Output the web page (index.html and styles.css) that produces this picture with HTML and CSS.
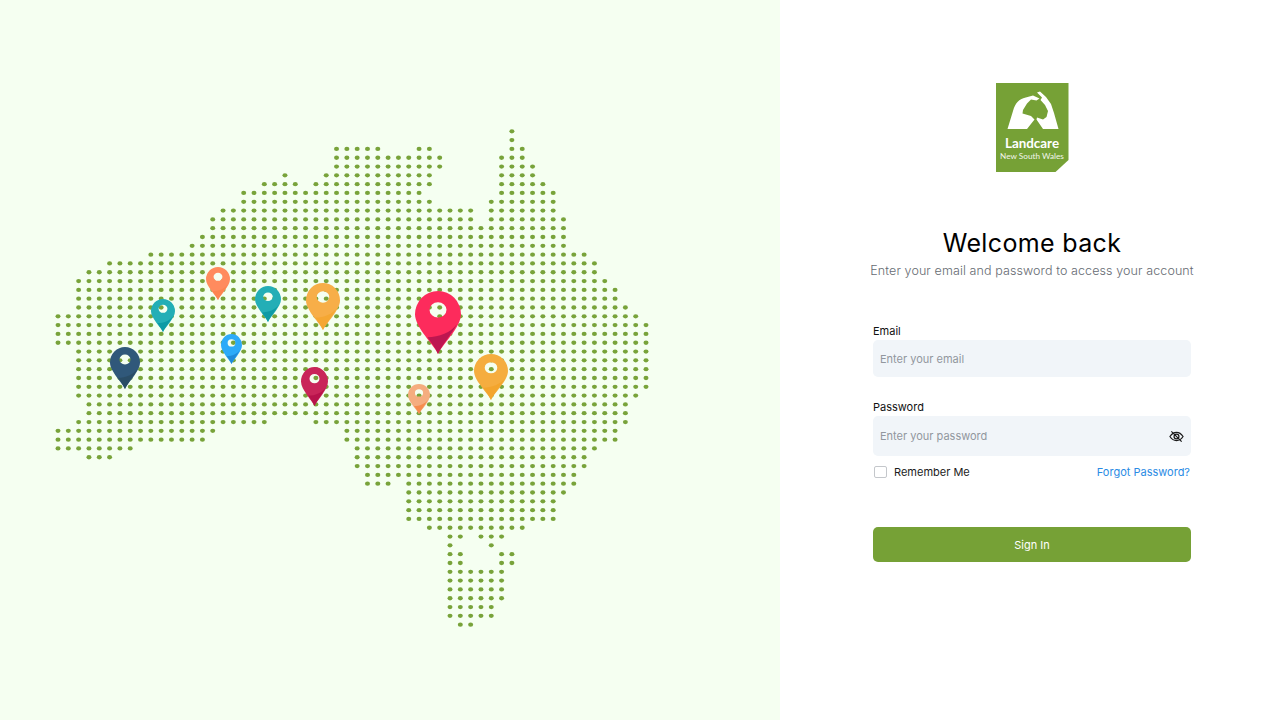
FILE: index.html
```html
<!DOCTYPE html>
<html lang="en">
<head>
<meta charset="utf-8">
<title>Landcare NSW - Sign in</title>
<link rel="stylesheet" href="styles.css">
</head>
<body>
<svg class="defs" width="0" height="0" aria-hidden="true">
  <symbol id="pin" viewBox="0 0 46 62" preserveAspectRatio="none">
    <path class="pin-body" fill-rule="evenodd" d="M23 62C19 53 0 36 0 23A23 23 0 1 1 46 23C46 36 27 53 23 62ZM14.5 18.5a8.5 7.5 0 1 0 17 0a8.5 7.5 0 1 0-17 0Z"/>
    <path class="pin-low" d="M12.5 45.5C24 45.5 36 41 42 32.5C37 42 27 53 23 62C20.5 56 16 50.5 12.5 45.5Z"/>
  </symbol>
</svg>
<main class="page">
  <section class="map">
    <svg id="dots" class="dots" viewBox="0 0 780 720" width="780" height="720" aria-hidden="true"></svg>
    <svg class="pin pin-coral"><use href="#pin"/></svg>
    <svg class="pin pin-teal-a"><use href="#pin"/></svg>
    <svg class="pin pin-teal-b"><use href="#pin"/></svg>
    <svg class="pin pin-amber"><use href="#pin"/></svg>
    <svg class="pin pin-red"><use href="#pin"/></svg>
    <svg class="pin pin-blue"><use href="#pin"/></svg>
    <svg class="pin pin-navy"><use href="#pin"/></svg>
    <svg class="pin pin-crimson"><use href="#pin"/></svg>
    <svg class="pin pin-peach"><use href="#pin"/></svg>
    <svg class="pin pin-gold"><use href="#pin"/></svg>
  </section>
  <section class="panel">
    <div class="logo">
      <svg class="logo-hands" viewBox="0 0 73 47" width="73" height="47" aria-hidden="true">
        <path fill="#fff" fill-rule="evenodd" d="M11.5 46L17 28C19 21 22 17 28 15L37 12.5L43.5 15.5L40.5 17.5L35 16.5L31 20.5L27 27L26.5 30.5L35 33L38.5 36.5L31 46ZM41 9.5L44 8.5L50 14L55 21L58 30L62.5 46H47L40.5 36.5L41 34.5L47 36.5L50.5 34L52 28L49 22L44.5 17L46 14.5Z"/>
      </svg>
      <span class="logo-name">Landcare</span>
      <span class="logo-sub">New South Wales</span>
    </div>
    <h1 class="title">Welcome back</h1>
    <p class="subtitle">Enter your email and password to access your account</p>
    <form class="form">
      <label class="label label-email">Email</label>
      <div class="input input-email"><span class="placeholder">Enter your email</span></div>
      <label class="label label-password">Password</label>
      <div class="input input-password">
        <span class="placeholder">Enter your password</span>
        <svg class="eye" viewBox="0 0 16 16" width="15" height="15" aria-hidden="true">
          <path d="M1 8C3 5 5.3 3.6 8 3.6S13 5 15 8C13 11 10.7 12.4 8 12.4S3 11 1 8Z"/>
          <circle cx="8" cy="8" r="2.6"/>
          <path d="M2.5 2.5L13.5 13.5"/>
        </svg>
      </div>
      <div class="options">
        <span class="remember"><span class="checkbox"></span>Remember Me</span>
        <a class="forgot">Forgot Password?</a>
      </div>
      <button class="submit" type="button">Sign In</button>
    </form>
  </section>
</main>
<script src="map.js"></script>
</body>
</html>
```
FILE: styles.css
```css
* { box-sizing: border-box; }
html, body { margin: 0; padding: 0; }
body {
  width: 1280px;
  height: 720px;
  overflow: hidden;
  background: #fff;
  font-family: Inter, "Noto Sans", "Liberation Sans", sans-serif;
  color: #000;
}
.defs { position: absolute; }
.page { display: flex; width: 1280px; height: 720px; }

/* map */
.map { position: relative; flex: 0 0 780px; height: 720px; background: #f5fff1; }
.dots { display: block; }
.dots ellipse { fill: #78a33a; }
.pin { position: absolute; display: block; }
.pin-body { fill: var(--top); }
.pin-low { fill: var(--low); }
.pin-red { left: 415px; top: 291px; width: 46px; height: 63px; --top: #fd2b5c; --low: #bd1650; }
.pin-gold { left: 474px; top: 354px; width: 34px; height: 46px; --top: #f5ad3f; --low: #f3a52d; }
.pin-peach { left: 408px; top: 384px; width: 22px; height: 30px; --top: #f5ad7f; --low: #f68c4e; }
.pin-crimson { left: 301px; top: 367px; width: 27px; height: 39px; --top: #c92559; --low: #b8124b; }
.pin-navy { left: 110px; top: 347px; width: 30px; height: 42px; --top: #30587a; --low: #2a4d66; }
.pin-teal-a { left: 151px; top: 299px; width: 24px; height: 33px; --top: #23aeb6; --low: #0c9aa5; }
.pin-teal-b { left: 255px; top: 286px; width: 26px; height: 36px; --top: #23aeb6; --low: #0c9aa5; }
.pin-blue { left: 221px; top: 334px; width: 21px; height: 30px; --top: #2cabf9; --low: #208bd9; }
.pin-amber { left: 306px; top: 283px; width: 34px; height: 47px; --top: #f7ae48; --low: #f5a733; }
.pin-coral { left: 206px; top: 267px; width: 24px; height: 33px; --top: #ff8b5e; --low: #fd8450; }

/* panel */
.panel {
  flex: 1;
  display: flex;
  flex-direction: column;
  align-items: center;
  padding: 83px 0 0 4px;
  background: #fff;
}
.logo {
  width: 73px;
  height: 89px;
  display: flex;
  flex-direction: column;
  align-items: center;
  background: #76a136;
  color: #fff;
  clip-path: polygon(0 0, 100% 0, 100% 77px, 60px 100%, 0 100%);
}
.logo-hands { display: block; flex: none; }
.logo-name { margin-top: 6px; font: 700 13.4px/14px Lato, sans-serif; }
.logo-sub { margin-top: 1px; font: 400 8.2px/10px Lato, sans-serif; white-space: nowrap; opacity: 0.9; }

.title {
  margin: 55px 0 0;
  font-size: 25px;
  line-height: 32px;
  font-weight: 400;
  letter-spacing: 0.35px;
  white-space: nowrap;
}
.subtitle {
  margin: 3px 0 0;
  font-size: 12.5px;
  line-height: 18px;
  font-weight: 300;
  letter-spacing: 0.1px;
  color: #666b72;
  white-space: nowrap;
}
.form { width: 318px; margin-top: 43px; display: flex; flex-direction: column; }
.label { display: block; font-size: 11px; line-height: 16px; color: #111; }
.label-password { margin-top: 22px; }
.input {
  display: flex;
  align-items: center;
  justify-content: space-between;
  margin-top: 1px;
  padding: 0 7px;
  background: #f1f5f9;
  border-radius: 5px;
}
.input-email { height: 37px; }
.input-password { height: 40px; }
.placeholder { font-size: 11px; color: #92979e; }
.eye { display: block; fill: none; stroke: #1a1a1a; stroke-width: 1.3; }
.options {
  display: flex;
  align-items: center;
  justify-content: space-between;
  margin-top: 10px;
  height: 12px;
  padding: 0 1px;
  font-size: 11px;
}
.remember { display: flex; align-items: center; color: #1c1c1c; }
.checkbox {
  width: 13px;
  height: 12px;
  margin-right: 7px;
  border: 1px solid #c4c7cb;
  border-radius: 2px;
  background: #fff;
}
.forgot { color: #2a8be4; font-weight: 400; }
.submit {
  margin-top: 49px;
  height: 35px;
  border: 0;
  border-radius: 5px;
  background: #76a136;
  color: #fff;
  font: 400 11px Inter, sans-serif;
}
```
FILE: map.js
```js
var rows = [
  [[44,44]],
  [[44,44]],
  [[27,31],[35,36],[44,45]],
  [[27,37],[43,45]],
  [[27,37],[43,46]],
  [[22,22],[26,36],[43,46]],
  [[20,23],[25,36],[43,47]],
  [[18,35],[43,48]],
  [[18,36],[42,48]],
  [[16,40],[42,48]],
  [[15,40],[42,49]],
  [[15,49]],
  [[14,49]],
  [[13,49]],
  [[9,51]],
  [[5,52]],
  [[3,52]],
  [[2,53]],
  [[2,54]],
  [[2,54]],
  [[2,55]],
  [[0,56]],
  [[0,57]],
  [[0,57]],
  [[0,57]],
  [[2,57]],
  [[2,57]],
  [[2,57]],
  [[2,57]],
  [[2,57]],
  [[2,56]],
  [[3,55]],
  [[3,55]],
  [[2,20],[25,55]],
  [[0,15],[28,54]],
  [[0,14],[28,54]],
  [[0,7],[29,52]],
  [[3,5],[29,51]],
  [[29,51]],
  [[30,50]],
  [[30,32],[34,50]],
  [[34,49]],
  [[34,48]],
  [[34,48]],
  [[34,48]],
  [[36,45]],
  [[38,39],[41,43]],
  [[38,38],[42,42]],
  [[38,39],[43,44]],
  [[38,39],[43,44]],
  [[38,43]],
  [[38,43]],
  [[38,43]],
  [[38,43]],
  [[38,42]],
  [[38,42]],
  [[39,40]]
];
var svg = document.getElementById('dots');
var ns = 'http://www.w3.org/2000/svg';
rows.forEach(function (spans, r) {
  spans.forEach(function (span) {
    for (var c = span[0]; c <= span[1]; c++) {
      var dot = document.createElementNS(ns, 'ellipse');
      dot.setAttribute('cx', (58 + 10.316 * c).toFixed(2));
      dot.setAttribute('cy', (131.3 + 8.81 * r).toFixed(2));
      dot.setAttribute('rx', '2.5');
      dot.setAttribute('ry', '2.15');
      svg.appendChild(dot);
    }
  });
});
```
